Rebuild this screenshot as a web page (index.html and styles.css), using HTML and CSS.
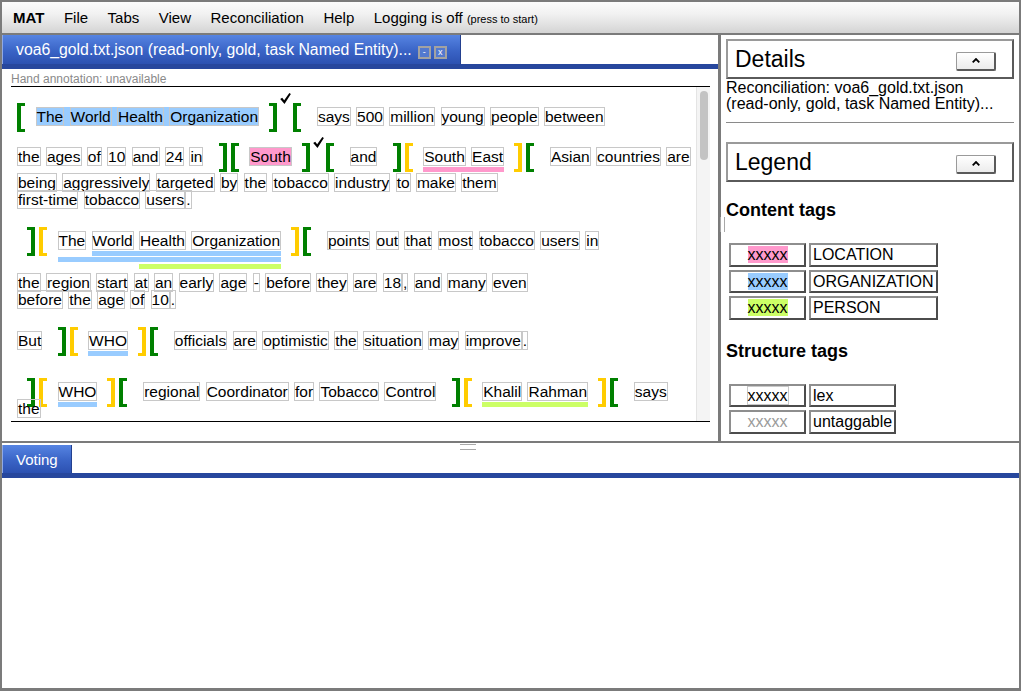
FILE: index.html
```html
<!DOCTYPE html>
<html lang="en">
<head>
<meta charset="utf-8">
<title>MAT</title>
<link rel="stylesheet" href="styles.css">
</head>
<body>
<div class="app">
  <nav class="menubar">
    <span class="menu-item brand">MAT</span>
    <span class="menu-item">File</span>
    <span class="menu-item">Tabs</span>
    <span class="menu-item">View</span>
    <span class="menu-item">Reconciliation</span>
    <span class="menu-item">Help</span>
    <span class="menu-item">Logging is off <small class="hint">(press to start)</small></span>
  </nav>

  <div class="workspace">
    <section class="doc-pane">
      <div class="tabbar">
        <div class="tab">
          <span class="tab-title">voa6_gold.txt.json (read-only, gold, task Named Entity)...</span>
          <span class="tab-btn">-</span><span class="tab-btn">x</span>
        </div>
      </div>
      <div class="tab-body">
        <div class="status">Hand annotation: unavailable</div>
        <div class="doc">
          <div class="doc-text">
<div class="ln"><span class="ob g"></span><span class="hl org"><span class="t">The</span> <span class="t">World</span> <span class="t">Health</span> <span class="t">Organization</span></span><span class="cb g"></span><svg class="ck hi" viewBox="0 0 10 10"><path d="M0.2 5.4 L2 4.3 L3.8 6.6 L8.5 0 L9.9 1 L4.1 10 Z"/></svg><span class="ob g"></span> <span class="t">says</span> <span class="t">500</span> <span class="t">million</span> <span class="t">young</span> <span class="t">people</span> <span class="t">between</span></div>
<div class="ln gap-23"><span class="t">the</span> <span class="t">ages</span> <span class="t">of</span> <span class="t">10</span> <span class="t">and</span> <span class="t">24</span> <span class="t">in</span> <span class="cb g"></span><span class="ob g"></span><span class="hl loc"><span class="t">South</span></span><span class="cb g"></span><svg class="ck" viewBox="0 0 10 10"><path d="M0.2 5.4 L2 4.3 L3.8 6.6 L8.5 0 L9.9 1 L4.1 10 Z"/></svg><span class="ob g"></span> <span class="t">and</span> <span class="cb g"></span><span class="ob y"></span><span class="ul loc"><span class="t">South</span> <span class="t">East</span></span><span class="cb y"></span><span class="ob g"></span> <span class="t">Asian</span> <span class="t">countries</span> <span class="t">are</span></div>
<div class="ln gap-9"><span class="t">being</span> <span class="t">aggressively</span> <span class="t">targeted</span> <span class="t">by</span> <span class="t">the</span> <span class="t">tobacco</span> <span class="t">industry</span> <span class="t">to</span> <span class="t">make</span> <span class="t">them</span></div>
<div class="ln"><span class="t">first-time</span> <span class="t">tobacco</span> <span class="t">users</span><span class="t">.</span></div>
<div class="ln gap-24"><span class="cb g"></span><span class="ob y"></span><span class="ul org d2"><span class="t">The</span> <span class="ul org"><span class="t">World</span> <span class="ul per d3"><span class="t">Health</span> <span class="t">Organization</span></span></span></span><span class="cb y"></span><span class="ob g"></span> <span class="t">points</span> <span class="t">out</span> <span class="t">that</span> <span class="t">most</span> <span class="t">tobacco</span> <span class="t">users</span> <span class="t">in</span></div>
<div class="ln gap-25"><span class="t">the</span> <span class="t">region</span> <span class="t">start</span> <span class="t">at</span> <span class="t">an</span> <span class="t">early</span> <span class="t">age</span> <span class="t">-</span> <span class="t">before</span> <span class="t">they</span> <span class="t">are</span> <span class="t">18</span><span class="t">,</span> <span class="t">and</span> <span class="t">many</span> <span class="t">even</span></div>
<div class="ln"><span class="t">before</span> <span class="t">the</span> <span class="t">age</span> <span class="t">of</span> <span class="t">10</span><span class="t">.</span></div>
<div class="ln gap-24"><span class="t">But</span> <span class="cb g"></span><span class="ob y"></span><span class="ul org"><span class="t">WHO</span></span><span class="cb y"></span><span class="ob g"></span> <span class="t">officials</span> <span class="t">are</span> <span class="t">optimistic</span> <span class="t">the</span> <span class="t">situation</span> <span class="t">may</span> <span class="t">improve</span><span class="t">.</span></div>
<div class="ln gap-34"><span class="cb g"></span><span class="ob y"></span><span class="ul org"><span class="t">WHO</span></span><span class="cb y"></span><span class="ob g"></span> <span class="t">regional</span> <span class="t">Coordinator</span> <span class="t">for</span> <span class="t">Tobacco</span> <span class="t">Control</span> <span class="cb g"></span><span class="ob y"></span><span class="ul per"><span class="t">Khalil</span> <span class="t">Rahman</span></span><span class="cb y"></span><span class="ob g"></span> <span class="t">says</span></div>
<div class="ln"><span class="t">the</span></div>
          </div>
          <div class="scrollbar"><div class="thumb"></div></div>
        </div>
      </div>
    </section>

    <aside class="side">
      <div class="panel-head">
        <span class="panel-title">Details</span>
        <button class="collapse" type="button"><svg viewBox="0 0 8 5" width="8" height="5"><polyline points="0.7,4.3 4,1 7.3,4.3"/></svg></button>
      </div>
      <div class="details-text">Reconciliation: voa6_gold.txt.json<br>(read-only, gold, task Named Entity)...</div>
      <hr class="rule">
      <div class="panel-head legend-head">
        <span class="panel-title">Legend</span>
        <button class="collapse" type="button"><svg viewBox="0 0 8 5" width="8" height="5"><polyline points="0.7,4.3 4,1 7.3,4.3"/></svg></button>
      </div>
      <h3 class="group-title">Content tags</h3>
      <table class="legend">
        <tr><td class="swatch"><span class="hl loc">xxxxx</span></td><td class="label">LOCATION</td></tr>
        <tr><td class="swatch"><span class="hl org">xxxxx</span></td><td class="label">ORGANIZATION</td></tr>
        <tr><td class="swatch"><span class="hl per">xxxxx</span></td><td class="label">PERSON</td></tr>
      </table>
      <h3 class="group-title">Structure tags</h3>
      <table class="legend">
        <tr><td class="swatch"><span class="lex">xxxxx</span></td><td class="label">lex</td></tr>
        <tr><td class="swatch"><span class="untag">xxxxx</span></td><td class="label">untaggable</td></tr>
      </table>
    </aside>
  </div>

  <section class="bottom-pane">
    <div class="tabbar bottom-tabs">
      <div class="tab">Voting</div>
    </div>
    <div class="bottom-body"></div>
  </section>
</div>
</body>
</html>
```
FILE: styles.css
```css
* { box-sizing: border-box; }
html, body { margin: 0; padding: 0; }
body {
  width: 1021px;
  height: 691px;
  overflow: hidden;
  background: #fff;
  color: #000;
  font-family: "Liberation Sans", Arial, sans-serif;
}

.app {
  width: 1021px;
  height: 691px;
  border: 2px solid #7b7b7b;
  border-bottom-width: 3px;
  display: flex;
  flex-direction: column;
  background: #fff;
}

/* menu bar */
.menubar {
  flex: none;
  height: 33px;
  display: flex;
  align-items: center;
  gap: 19.5px;
  padding-left: 11px;
  font-size: 15px;
  background: linear-gradient(#fcfcfc, #f1f1f1 40%, #d4d4d4);
  border-bottom: 2px solid #7b7b7b;
}
.brand { font-weight: bold; }
.hint { font-size: 11px; }

/* top workspace */
.workspace {
  flex: none;
  height: 408px;
  display: flex;
  border-bottom: 2px solid #7b7b7b;
}

.doc-pane {
  flex: none;
  width: 719px;
  border-right: 3px solid #7b7b7b;
  display: flex;
  flex-direction: column;
}

.tabbar {
  flex: none;
  height: 34px;
  display: flex;
  border-bottom: 5px solid #27479d;
}
.tab {
  display: flex;
  align-items: center;
  padding: 0 13px;
  color: #fff;
  font-size: 16px;
  background: linear-gradient(#5684e2, #3a64c6 55%, #2c51b1);
  border-left: 1px solid #8fa9e6;
  border-right: 1px solid #23408f;
}
.tab-title { margin-right: 3px; white-space: nowrap; font-size: 15.8px; }
.tab-btn {
  width: 13px;
  height: 13px;
  margin-top: 6px;
  margin-left: 3px;
  border: 2px solid #a2a2a2;
  background: #5379cf;
  color: #fff;
  font-size: 9px;
  line-height: 8px;
  text-align: center;
}

.tab-body {
  flex: 1;
  display: flex;
  flex-direction: column;
  padding: 3px 8px 0 9px;
}
.status {
  height: 14px;
  font-size: 12px;
  line-height: 14px;
  color: #8a8a8a;
}

.doc {
  height: 336px;
  display: flex;
  border-top: 1px solid #000;
  border-bottom: 1px solid #000;
}
.doc-text {
  flex: 1;
  overflow: hidden;
  padding: 21px 0 0 6px;
  font-size: 15.5px;
  white-space: nowrap;
  word-spacing: 1px;
}
.scrollbar {
  flex: none;
  width: 14px;
  background: #f4f4f4;
  border-left: 1px solid #e4e4e4;
}
.thumb {
  width: 8px;
  height: 69px;
  margin: 4px 0 0 3px;
  border-radius: 4px;
  background: #c3c3c3;
}

.ln { height: 17px; line-height: 17px; }
.gap-9 { margin-top: 9px; }
.gap-23 { margin-top: 23px; }
.gap-24 { margin-top: 24px; }
.gap-25 { margin-top: 25px; }
.gap-34 { margin-top: 34px; }

.t { border: 1px solid #c8c8c8; }

.hl { padding: 1px 0; }
.hl.org { background: #99ccff; }
.hl.loc { background: #ff99cc; }
.hl.per { background: #ccff66; }

.ul { padding-bottom: 2px; border-bottom: 5px solid transparent; }
.ul.d2 { padding-bottom: 8px; }
.ul.d3 { padding-bottom: 15px; }
.ul.org { border-bottom-color: #99ccff; }
.ul.loc { border-bottom-color: #ff99cc; }
.ul.per { border-bottom-color: #ccff66; }

.ob, .cb {
  display: inline-block;
  width: 8px;
  height: 29px;
  vertical-align: middle;
  margin-top: -7px;
  margin-bottom: -7px;
  border: 3px solid currentColor;
}
.ob { border-right: 0; border-left-width: 4px; margin-right: 10.5px; }
.cb { border-left: 0; border-right-width: 4px; margin-left: 10px; }
.cb + .ob { margin-left: 4px; }
.g { color: #008000; }
.y { color: #ffcc00; }

.ck {
  display: inline-block;
  width: 11px;
  height: 11px;
  vertical-align: middle;
  margin: -7px 2px -7px 3px;
  position: relative;
  top: -15px;
  fill: #000;
}
.ck.hi { top: -19px; }

/* side pane */
.side {
  flex: 1;
  position: relative;
  padding: 4px 5px 0 5px;
}
.side::before {
  content: "";
  position: absolute;
  left: -1px;
  top: 182px;
  width: 3px;
  height: 15px;
  border-left: 1px solid #a8a8a8;
  border-right: 1px solid #a8a8a8;
}
.panel-head {
  height: 40px;
  display: flex;
  align-items: center;
  justify-content: space-between;
  padding: 0 16px 0 7px;
  border: 2px solid;
  border-color: #9a9a9a #5a5a5a #5a5a5a #9a9a9a;
}
.panel-title { font-size: 23px; }
.collapse {
  width: 40px;
  height: 19px;
  padding: 0;
  margin: 4px 0 0 0;
  display: flex;
  align-items: center;
  justify-content: center;
  background: linear-gradient(#ffffff, #ececec);
  border: 1px solid #9a9a9a;
  border-right: 2px solid #5a5a5a;
  border-bottom: 2px solid #5a5a5a;
  border-radius: 2px;
}
.collapse svg { fill: none; stroke: #000; stroke-width: 1.8; }

.details-text {
  margin-top: 1px;
  font-size: 16px;
  line-height: 16px;
}
.rule {
  margin: 10px 0 0 0;
  border: 0;
  border-top: 1px solid #8a8a8a;
  height: 0;
}
.legend-head { margin-top: 19px; }

.group-title {
  margin: 18px 0 0 0;
  font-size: 18px;
  line-height: 21px;
  font-weight: bold;
}

.legend {
  margin-top: 19px;
  border-collapse: separate;
  border-spacing: 3px;
  font-size: 16px;
}
.legend td {
  padding: 1px 2px 1.5px;
  line-height: 17px;
  border: 2px solid;
  border-color: #8e8e8e #4c4c4c #4c4c4c #8e8e8e;
}
.legend .swatch { width: 77px; text-align: center; }
.legend .swatch .hl { padding: 0; }
.lex { border: 1px solid #c8c8c8; }
.untag { color: #9a9a9a; }

/* bottom pane */
.bottom-pane {
  flex: 1;
  position: relative;
  display: flex;
  flex-direction: column;
  padding-top: 2px;
}
.bottom-pane::before {
  content: "";
  position: absolute;
  left: 458px;
  top: 1px;
  width: 16px;
  height: 4px;
  border-top: 1px solid #a8a8a8;
  border-bottom: 1px solid #a8a8a8;
}
.bottom-tabs { height: 33px; }
.bottom-tabs .tab { font-size: 15px; }
.bottom-body { flex: 1; }
```
